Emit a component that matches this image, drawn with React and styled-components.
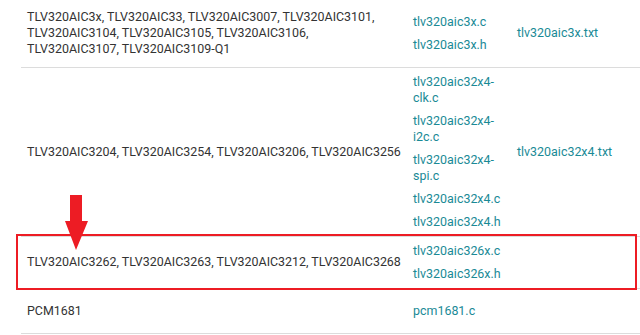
import React from 'react';
import styled, { createGlobalStyle } from 'styled-components';

const GlobalStyle = createGlobalStyle`
  html, body {
    margin: 0;
    padding: 0;
    background: #fff;
  }
  body {
    font-family: Roboto, "Liberation Sans", Arial, sans-serif;
  }
`;

const Page = styled.div`
  position: relative;
  width: 640px;
  height: 335px;
  overflow: hidden;
  background: #fff;
`;

const Table = styled.table`
  margin-left: 21px;
  width: 640px;
  border-collapse: collapse;
  table-layout: fixed;
  font-size: 12.45px;
  line-height: 16px;
  color: #333;
`;

const Row = styled.tr`
  height: ${p => p.h}px;
  border-bottom: 1px solid #dcdcdc;
`;

const Cell = styled.td`
  width: ${p => p.w}px;
  padding: 0 6px;
  vertical-align: middle;
  box-sizing: border-box;
`;

const FileLink = styled.a`
  display: block;
  color: #1a8a96;
  text-decoration: none;
  & + & {
    margin-top: 7px;
  }
`;

const Highlight = styled.div`
  position: absolute;
  left: 16px;
  top: 234px;
  width: 617px;
  height: 52px;
  border: 2px solid #ed1c24;
  pointer-events: none;
`;

const Arrow = styled.svg`
  position: absolute;
  left: 64px;
  top: 195px;
`;

const rows = [
  {
    h: 67,
    parts: ['TLV320AIC3x, TLV320AIC33, TLV320AIC3007, TLV320AIC3101,', 'TLV320AIC3104, TLV320AIC3105, TLV320AIC3106,', 'TLV320AIC3107, TLV320AIC3109-Q1'],
    sources: ['tlv320aic3x.c', 'tlv320aic3x.h'],
    docs: 'tlv320aic3x.txt',
  },
  {
    h: 169,
    parts: ['TLV320AIC3204, TLV320AIC3254, TLV320AIC3206, TLV320AIC3256'],
    sources: ['tlv320aic32x4-clk.c', 'tlv320aic32x4-i2c.c', 'tlv320aic32x4-spi.c', 'tlv320aic32x4.c', 'tlv320aic32x4.h'],
    docs: 'tlv320aic32x4.txt',
  },
  {
    h: 52,
    parts: ['TLV320AIC3262, TLV320AIC3263, TLV320AIC3212, TLV320AIC3268'],
    sources: ['tlv320aic326x.c', 'tlv320aic326x.h'],
  },
  {
    h: 45,
    parts: ['PCM1681'],
    sources: ['pcm1681.c'],
  },
];

export default function App() {
  return (
    <Page>
      <GlobalStyle />
      <Table>
        <tbody>
          {rows.map((r, i) => (
            <Row key={i} h={r.h}>
              <Cell w={386}>
                {r.parts.map((t, j) => (
                  <React.Fragment key={j}>
                    {j > 0 && <br />}
                    {t}
                  </React.Fragment>
                ))}
              </Cell>
              <Cell w={104}>
                {r.sources.map(s => (
                  <FileLink key={s} href="#">{s}</FileLink>
                ))}
              </Cell>
              <Cell>
                {r.docs && <FileLink href="#">{r.docs}</FileLink>}
              </Cell>
            </Row>
          ))}
        </tbody>
      </Table>
      <Highlight />
      <Arrow width="26" height="56" viewBox="0 0 26 56">
        <path d="M6 0 H18 V26 H24 L12 55 L1 26 H6 Z" fill="#ed1c24" />
      </Arrow>
    </Page>
  );
}
